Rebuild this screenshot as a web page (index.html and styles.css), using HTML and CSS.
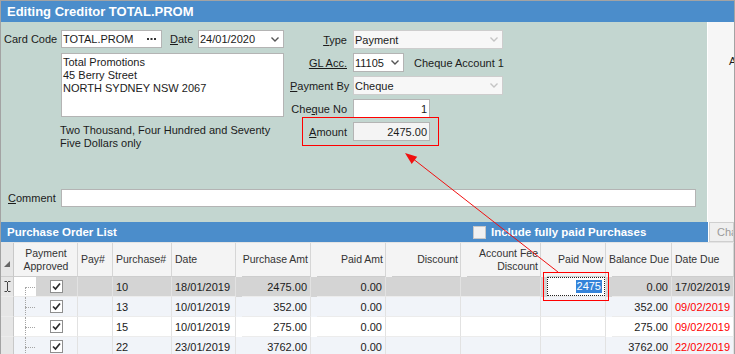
FILE: index.html
```html
<!DOCTYPE html>
<html lang="en">
<head>
  <meta charset="UTF-8" />
  <title>Editing Creditor TOTAL.PROM</title>
  <link rel="stylesheet" href="styles.css">
</head>
<body>

<div class="window">
  <div class="titlebar">Editing Creditor TOTAL.PROM</div>

  <div class="top">
    <div class="form">
      <div class="cols">

        <!-- creditor side -->
        <div class="left">
          <div class="row">
            <label class="lbl code-lbl">Card Code</label>
            <div class="field code">
              TOTAL.PROM
              <svg class="dots" width="9" height="2" viewBox="0 0 9 2"><rect x="0" y="0" width="2" height="2"/><rect x="3.5" y="0" width="2" height="2"/><rect x="7" y="0" width="2" height="2"/></svg>
            </div>
            <label class="lbl date-lbl"><u>D</u>ate</label>
            <div class="field date">
              24/01/2020
              <svg class="chev" width="8" height="5" viewBox="0 0 8 5"><polyline points="0.5,0.5 4,4 7.5,0.5"/></svg>
            </div>
          </div>
          <div class="address">Total Promotions<br>45 Berry Street<br>NORTH SYDNEY NSW 2067</div>
          <p class="words">Two Thousand, Four Hundred and Seventy<br>Five Dollars only</p>
        </div>

        <!-- payment side -->
        <div class="right">
          <div class="prow">
            <label class="plbl"><u>T</u>ype</label>
            <div class="field wide disabled">
              Payment
              <svg class="chev light" width="8" height="5" viewBox="0 0 8 5"><polyline points="0.5,0.5 4,4 7.5,0.5"/></svg>
            </div>
          </div>
          <div class="prow">
            <label class="plbl"><u>GL Acc.</u></label>
            <div class="field gl">
              11105
              <svg class="chev" width="8" height="5" viewBox="0 0 8 5"><polyline points="0.5,0.5 4,4 7.5,0.5"/></svg>
            </div>
            <span class="acc-name">Cheque Account 1</span>
          </div>
          <div class="prow">
            <label class="plbl"><u>P</u>ayment By</label>
            <div class="field wide disabled">
              Cheque
              <svg class="chev light" width="8" height="5" viewBox="0 0 8 5"><polyline points="0.5,0.5 4,4 7.5,0.5"/></svg>
            </div>
          </div>
          <div class="prow">
            <label class="plbl">Che<u>q</u>ue No</label>
            <div class="field num">1</div>
          </div>
          <div class="prow amount-row">
            <label class="plbl"><u>A</u>mount</label>
            <div class="field num readonly">2475.00</div>
          </div>
        </div>

      </div>

      <div class="comment-row">
        <label class="lbl comment-lbl"><u>C</u>omment</label>
        <div class="field comment"></div>
      </div>
    </div>
    <div class="side">A</div>
  </div>

  <div class="listbar">
    <div class="list-head">
      <span class="list-title">Purchase Order List</span>
      <span class="include"><span class="include-box"></span>Include fully paid Purchases</span>
    </div>
    <div class="side-btn">Cha</div>
  </div>

  <div class="grid">
    <div class="grid-row head">
      <div class="cell ind"><span class="corner"></span></div>
      <div class="cell center">Payment<br>Approved</div>
      <div class="cell">Pay#</div>
      <div class="cell">Purchase#</div>
      <div class="cell">Date</div>
      <div class="cell right">Purchase Amt</div>
      <div class="cell right">Paid Amt</div>
      <div class="cell right">Discount</div>
      <div class="cell right">Account Fee<br>Discount</div>
      <div class="cell right">Paid Now</div>
      <div class="cell right">Balance Due</div>
      <div class="cell">Date Due</div>
    </div>

    <div class="grid-row sel">
      <div class="cell ind">
        <svg width="7" height="11" viewBox="0 0 7 11"><path d="M0.5 0.5h2.5M4 0.5h2.5M3.5 1v9M0.5 10.5h2.5M4 10.5h2.5"/></svg>
      </div>
      <div class="cell approve">
        <span class="tree first"></span>
        <span class="chk-wrap"><span class="chk"><svg width="11" height="11" viewBox="0 0 11 11"><polyline points="2,5.5 4.5,8 9,2.5"/></svg></span></span>
      </div>
      <div class="cell"></div>
      <div class="cell">10</div>
      <div class="cell">18/01/2019</div>
      <div class="cell right">2475.00</div>
      <div class="cell right">0.00</div>
      <div class="cell"></div>
      <div class="cell"></div>
      <div class="cell right editing"><span class="hl">2475</span></div>
      <div class="cell right">0.00</div>
      <div class="cell">17/02/2019</div>
    </div>

    <div class="grid-row alt">
      <div class="cell ind"></div>
      <div class="cell approve">
        <span class="tree"></span>
        <span class="chk-wrap"><span class="chk"><svg width="11" height="11" viewBox="0 0 11 11"><polyline points="2,5.5 4.5,8 9,2.5"/></svg></span></span>
      </div>
      <div class="cell"></div>
      <div class="cell">13</div>
      <div class="cell">10/01/2019</div>
      <div class="cell right">352.00</div>
      <div class="cell right">0.00</div>
      <div class="cell"></div>
      <div class="cell"></div>
      <div class="cell"></div>
      <div class="cell right">352.00</div>
      <div class="cell overdue">09/02/2019</div>
    </div>

    <div class="grid-row">
      <div class="cell ind"></div>
      <div class="cell approve">
        <span class="tree"></span>
        <span class="chk-wrap"><span class="chk"><svg width="11" height="11" viewBox="0 0 11 11"><polyline points="2,5.5 4.5,8 9,2.5"/></svg></span></span>
      </div>
      <div class="cell"></div>
      <div class="cell">15</div>
      <div class="cell">10/01/2019</div>
      <div class="cell right">275.00</div>
      <div class="cell right">0.00</div>
      <div class="cell"></div>
      <div class="cell"></div>
      <div class="cell"></div>
      <div class="cell right">275.00</div>
      <div class="cell overdue">09/02/2019</div>
    </div>

    <div class="grid-row alt">
      <div class="cell ind"></div>
      <div class="cell approve">
        <span class="tree"></span>
        <span class="chk-wrap"><span class="chk"><svg width="11" height="11" viewBox="0 0 11 11"><polyline points="2,5.5 4.5,8 9,2.5"/></svg></span></span>
      </div>
      <div class="cell"></div>
      <div class="cell">22</div>
      <div class="cell">23/01/2019</div>
      <div class="cell right">3762.00</div>
      <div class="cell right">0.00</div>
      <div class="cell"></div>
      <div class="cell"></div>
      <div class="cell"></div>
      <div class="cell right">3762.00</div>
      <div class="cell overdue">22/02/2019</div>
    </div>
  </div>

  <!-- annotation arrow: paid now -> amount -->
  <svg class="arrow" width="735" height="354" viewBox="0 0 735 354">
    <line x1="558" y1="272" x2="412" y2="158"/>
    <polygon points="405,153 417.2,156.8 411.7,163.9"/>
  </svg>
</div>

</body>
</html>
```

FILE: styles.css
```css
:root {
  --blue: #4b8dcb;
  --form-bg: #c3d6d0;
  --border: #b4b4b4;
  --text: #1b1b1b;
  --red: #f00;
}

* {
  box-sizing: border-box;
  margin: 0;
  padding: 0;
}

body {
  font-family: "Liberation Sans", Arial, sans-serif;
  font-size: 11px;
  color: var(--text);
  background: #fff;
  overflow: hidden;
}

.window {
  position: relative;
  width: 735px;
  height: 354px;
  border: 1px solid #a3a3a3;
  border-bottom: none;
  overflow: hidden;
}

.titlebar {
  height: 21px;
  background: var(--blue);
  color: #fff;
  font-weight: bold;
  font-size: 13px;
  line-height: 21px;
  padding-left: 6px;
}

/* TOP FORM */
.top {
  display: flex;
  height: 200px;
}

.form {
  width: 706px;
  background: var(--form-bg);
  display: flex;
  flex-direction: column;
  padding: 8px 0 15px;
}

.side {
  flex: 1;
  background: #f6f6f6;
  border-left: 1px solid #fff;
  padding: 33px 0 0 21px;
  overflow: hidden;
  line-height: 13px;
}

.cols {
  display: flex;
}

.left {
  width: 280px;
  margin-left: 3px;
}

.row {
  display: flex;
  align-items: center;
  height: 18px;
}

.lbl {
  white-space: nowrap;
}

.code-lbl {
  width: 57px;
}

.date-lbl {
  width: 28px;
  margin-left: 8px;
}

.field {
  display: flex;
  align-items: center;
  height: 18px;
  background: #fff;
  border: 1px solid var(--border);
  padding: 0 1px;
  white-space: nowrap;
}

.field svg {
  margin-left: auto;
}

.code {
  width: 101px;
}

.dots {
  fill: #333;
  margin-right: 4px;
}

.date {
  width: 86px;
}

.chev {
  fill: none;
  stroke: #555;
  stroke-width: 1.4;
  margin-right: 3px;
}

.chev.light {
  stroke: #c4c4c4;
}

.address {
  margin: 5px 0 0 57px;
  height: 64px;
  background: #fff;
  border: 1px solid var(--border);
  padding: 2px 1px;
  line-height: 13px;
}

.words {
  margin: 7px 0 0 56px;
  line-height: 13px;
}

.right {
  margin-left: 6px;
}

.prow {
  display: flex;
  align-items: center;
  height: 19px;
  margin-bottom: 4px;
}

.plbl {
  width: 57px;
  text-align: right;
  margin-right: 6px;
  white-space: nowrap;
}

.prow .field {
  height: 19px;
}

.wide {
  width: 150px;
}

.disabled {
  background: #f7f7f7;
  border-color: #cdcdcd;
}

.gl {
  width: 51px;
}

.acc-name {
  margin-left: 10px;
}

.num {
  width: 77px;
  justify-content: flex-end;
  padding-right: 2px;
}

.readonly {
  background: #f4f4f4;
}

.amount-row {
  position: relative;
}

.amount-row::after {
  content: "";
  position: absolute;
  left: 12px;
  top: -5px;
  width: 135px;
  height: 27px;
  border: 1px solid var(--red);
}

.comment-row {
  display: flex;
  align-items: center;
  margin-top: auto;
  padding-left: 7px;
  margin-right: 11px;
}

.comment-lbl {
  width: 53px;
}

.comment {
  flex: 1;
}

/* LIST BAR */
.listbar {
  display: flex;
  height: 20px;
}

.list-head {
  width: 707px;
  background: var(--blue);
  color: #fff;
  font-weight: bold;
  font-size: 11.5px;
  display: flex;
  align-items: center;
  padding-left: 6px;
}

.list-title {
  width: 466px;
}

.include {
  display: flex;
  align-items: center;
}

.include-box {
  width: 13px;
  height: 13px;
  background: #f1f1f1;
  border: 1px solid #c8c8c8;
  margin-right: 5px;
}

.side-btn {
  flex: 1;
  margin-left: 1px;
  background: #efefef;
  border: 1px solid #cfcfcf;
  color: #9a9a9a;
  padding: 3px 0 0 7px;
  overflow: hidden;
}

/* GRID */
.grid {
  border-top: 1px solid #e4e4e4;
}

.grid-row {
  display: grid;
  grid-template-columns: 13px 64px 35px 59px 64px 75px 75px 75px 80px 65px 66px 62px;
  height: 20px;
  background: #fff;
}

.grid-row.alt {
  background: #f1f4f9;
}

.grid-row.sel {
  background: #d4d4d4;
}

.cell {
  display: flex;
  align-items: center;
  padding: 0 3px;
  border-right: 1px solid #e2e2e2;
  border-bottom: 1px solid #ececec;
  white-space: nowrap;
  overflow: hidden;
}

.cell.right {
  justify-content: flex-end;
}

.cell.center {
  justify-content: center;
  text-align: center;
}

.grid-row.head {
  height: 34px;
  background: #f4f4f4;
  color: #333;
  font-size: 10.5px;
  line-height: 13px;
}

.head .cell {
  padding: 0 2px 0 3px;
  border-right-color: #d6d6d6;
  border-bottom-color: #cdcdcd;
  overflow: visible;
}

.head .cell.right {
  text-align: right;
  padding-left: 1px;
}

.cell.ind {
  background: #e6e6e6;
  border-right-color: #c8c8c8;
  padding: 0 0 0 3px;
}

.head .cell.ind {
  align-items: flex-end;
  padding-bottom: 9px;
}

.corner {
  width: 0;
  height: 0;
  border-left: 6px solid transparent;
  border-bottom: 6px solid #666;
}

.ind svg {
  fill: none;
  stroke: #444;
  stroke-width: 1;
}

.cell.approve {
  padding: 0;
}

.tree {
  position: relative;
  width: 22px;
  height: 100%;
  flex-shrink: 0;
}

.sel .tree {
  background: #fff;
}

.tree::before {
  content: "";
  position: absolute;
  left: 11px;
  top: 0;
  bottom: -1px;
  border-left: 1px dotted #a5a5a5;
}

.tree.first::before {
  top: 50%;
}

.tree::after {
  content: "";
  position: absolute;
  left: 11px;
  width: 10px;
  top: 50%;
  border-top: 1px dotted #a5a5a5;
}

.chk-wrap {
  flex: 1;
  display: flex;
  justify-content: center;
}

.chk {
  display: flex;
  align-items: center;
  justify-content: center;
  width: 13px;
  height: 13px;
  background: #fff;
  border: 1px solid #8e8e8e;
}

.chk svg {
  fill: none;
  stroke: #2b2b2b;
  stroke-width: 1.7;
}

.cell.editing {
  position: relative;
  background: #fff;
  overflow: visible;
}

.cell.editing::before {
  content: "";
  position: absolute;
  inset: 0;
  border: 1px dotted #222;
}

.cell.editing::after {
  content: "";
  position: absolute;
  left: -4px;
  right: -4px;
  top: -5px;
  bottom: -5px;
  border: 1px solid var(--red);
}

.hl {
  background: #3483d9;
  color: #fff;
  line-height: 13px;
  padding: 0 1px;
}

.cell.overdue {
  color: var(--red);
}

.arrow {
  position: absolute;
  left: -1px;
  top: -1px;
  pointer-events: none;
}

.arrow line {
  stroke: #f01010;
  stroke-width: 1;
}

.arrow polygon {
  fill: #f01010;
}
```
